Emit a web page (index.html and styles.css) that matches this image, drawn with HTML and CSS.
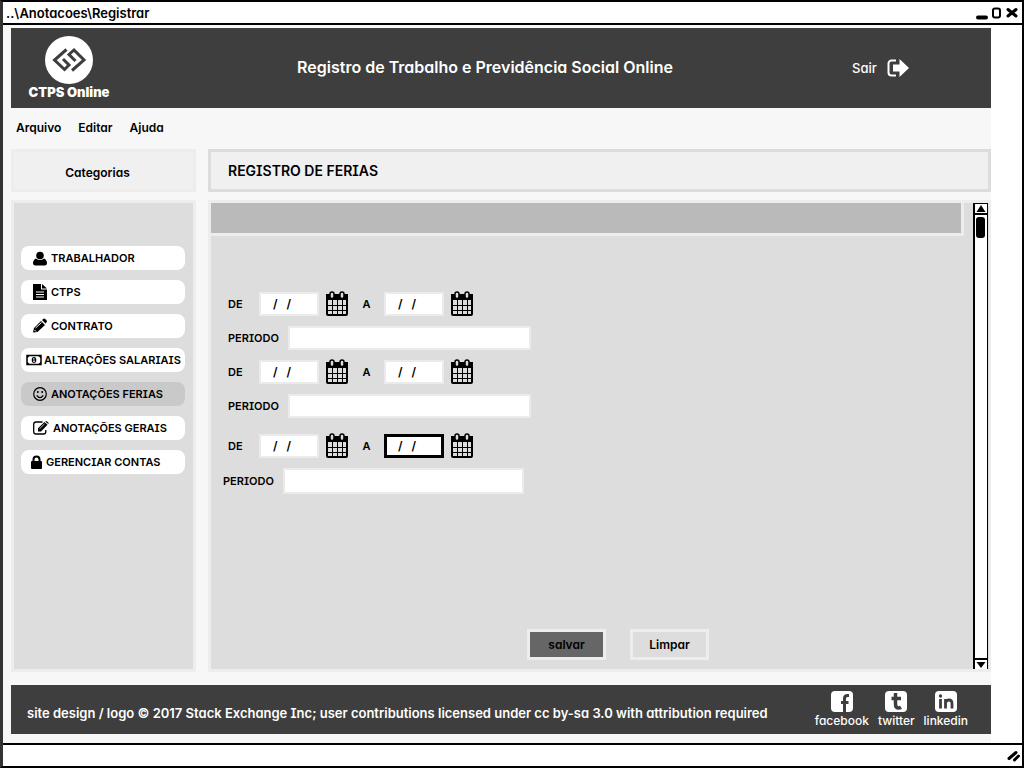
FILE: index.html
```html
<!DOCTYPE html>
<html lang="pt-BR">
<head>
<meta charset="utf-8">
<meta name="viewport" content="width=device-width, initial-scale=1">
<title>CTPS Online</title>
<link rel="stylesheet" href="styles.css">
</head>
<body>
<svg class="symbols" aria-hidden="true">
  <symbol id="calendar" viewBox="0 0 24 26">
    <rect x="2" y="4" width="20" height="20" rx="1" fill="none" stroke="#000" stroke-width="2"/>
    <path d="M1 3h22v6H1z"/>
    <path d="M7.500 9v15M12.500 9v15M17.500 9v15M2 14.500h20M2 19.500h20" stroke="#000" stroke-width="1"/>
    <rect x="5" y="1" width="4" height="6.500" rx="2" fill="#ddd" stroke="#000" stroke-width="1.500"/>
    <rect x="15" y="1" width="4" height="6.500" rx="2" fill="#ddd" stroke="#000" stroke-width="1.500"/>
  </symbol>
</svg>
<div class="window">
  <header class="titlebar">
    <span>..\Anotacoes\Registrar</span>
    <svg class="titlebar-controls" width="44" height="16" viewBox="0 0 44 16" fill="none" stroke="#000" aria-hidden="true">
      <path d="M3 12.500h8" stroke-width="4" stroke-linecap="round"/>
      <rect x="18" y="3.500" width="7" height="9" rx="2" stroke-width="2"/>
      <path d="M33 4.500l8 6.500M41 4.500l-8 6.500" stroke-width="3" stroke-linecap="round"/>
    </svg>
  </header>

  <div class="workspace">
    <div class="banner">
      <div class="brand">
        <svg width="48" height="48" viewBox="0 0 48 48" aria-hidden="true">
          <circle cx="24" cy="24" r="24" fill="#fff"/>
          <g fill="none" stroke="#3e3e3e" stroke-width="3">
            <path d="M21.500 13.500L9.500 24l10 9.500 4.500-4.500-6-6"/>
            <path d="M27 34.500L39 24 29 14l-5 4.500 6.500 6.500"/>
          </g>
        </svg>
        <strong>CTPS Online</strong>
      </div>
      <h1 class="banner-title">Registro de Trabalho e Previdência Social Online</h1>
      <a class="logout" href="#">Sair
        <svg width="22" height="18" viewBox="0 0 22 18" aria-hidden="true">
          <path d="M9 1.500H4.500a3 3 0 0 0-3 3v9a3 3 0 0 0 3 3H9" fill="none" stroke="#fff" stroke-width="2"/>
          <path d="M6 5.500h6.500V0L22 9l-9.500 9v-5.500H6z" fill="#fff"/>
        </svg>
      </a>
    </div>

    <nav class="menu">
      <a href="#">Arquivo</a><a href="#">Editar</a><a href="#">Ajuda</a>
    </nav>

    <main class="columns">
      <h2 class="heading heading-side">Categorias</h2>
      <h2 class="heading heading-main">REGISTRO DE FERIAS</h2>

      <nav class="sidebar">
        <a class="category" href="#">
          <svg width="14" height="16" viewBox="0 0 14 16"><circle cx="7" cy="5.500" r="3.800"/><path d="M3 8.500q4 3.200 8 0 3 1.500 3 4.800 0 2.200-2.500 2.200h-9Q0 15.500 0 13.300 0 10 3 8.500z"/></svg>
          TRABALHADOR</a>
        <a class="category" href="#">
          <svg width="14" height="16" viewBox="0 0 14 16"><path d="M0 0h8v5.500h6V16H0z"/><path d="M9 0l5 4.500H9z"/><path d="M3 8h8M3 10.500h8M3 13h8" stroke="#fff"/></svg>
          CTPS</a>
        <a class="category" href="#">
          <svg width="14" height="16" viewBox="0 0 14 16"><path d="M0 14.500l1-4.500 7-7 4 4-7.500 7z"/><path d="M9 2l1.500-1.200q1 -.6 2 .4l1 1q.8 1 0 2L12.500 5.500z"/><path d="M2.500 10L8.500 4.500M1.500 12l1.500 1.500" stroke="#fff" stroke-width="1"/></svg>
          CONTRATO</a>
        <a class="category category-long" href="#">
          <svg width="16" height="12" viewBox="0 0 16 12"><rect x="1" y="1.500" width="14" height="9" fill="none" stroke="#000" stroke-width="1.500"/><path d="M1 1.500h3L1 4.500zM12 1.500h3v3zM1 7.500l3 3H1zM15 7.500v3h-3z"/><ellipse cx="8" cy="6" rx="2.300" ry="3"/><path d="M7 5l1-.7v3.200M7 7.600h2" stroke="#fff" fill="none" stroke-width=".8"/></svg>
          ALTERAÇÕES SALARIAIS</a>
        <a class="category category-current" href="#" aria-current="page">
          <svg width="14" height="16" viewBox="0 0 14 16"><g fill="none" stroke="#000" stroke-width="1.200"><circle cx="7" cy="8" r="6.300"/><path d="M3.800 9.300q3.200 4.500 6.400 0"/></g><circle cx="4.800" cy="6" r="1"/><circle cx="9.200" cy="6" r="1"/></svg>
          ANOTAÇÕES FERIAS</a>
        <a class="category" href="#">
          <svg width="16" height="16" viewBox="0 0 16 16"><path d="M9.500 2H3Q.7 2 .7 4.300v7.400Q.7 14 3 14h7.500q2.300 0 2.300-2.300V10" fill="none" stroke="#000" stroke-width="1.300"/><path d="M5 11.500V8.300L11.500 2l3 2.800L8 11.500zM12.200 1.400q1-.8 1.800 0l1.300 1.200q.7.700 0 1.500z"/><path d="M6.500 8.800L11.500 4" stroke="#fff" stroke-width=".7"/></svg>
          ANOTAÇÕES GERAIS</a>
        <a class="category category-account" href="#">
          <svg width="11" height="14" viewBox="0 0 11 14"><rect y="6" width="11" height="8" rx="1"/><path d="M2.500 7V4.500a3 3 0 0 1 6 0V7" fill="none" stroke="#000" stroke-width="2"/></svg>
          GERENCIAR CONTAS</a>
      </nav>

      <section class="panel">
        <form class="record-form">
          <div class="form-bar"></div>
          <div class="periods">
            <div class="period">
              <div class="date-row">
                <label class="from-label" for="from1">DE</label>
                <input class="date" id="from1" value="/   /">
                <svg class="calendar" aria-hidden="true"><use href="#calendar"/></svg>
                <label class="to-label" for="to1">A</label>
                <input class="date" id="to1" value="/   /">
                <svg class="calendar" aria-hidden="true"><use href="#calendar"/></svg>
              </div>
              <div class="period-row">
                <label for="period1">PERIODO</label>
                <input class="period-input" id="period1">
              </div>
            </div>
            <div class="period">
              <div class="date-row">
                <label class="from-label" for="from2">DE</label>
                <input class="date" id="from2" value="/   /">
                <svg class="calendar" aria-hidden="true"><use href="#calendar"/></svg>
                <label class="to-label" for="to2">A</label>
                <input class="date" id="to2" value="/   /">
                <svg class="calendar" aria-hidden="true"><use href="#calendar"/></svg>
              </div>
              <div class="period-row">
                <label for="period2">PERIODO</label>
                <input class="period-input" id="period2">
              </div>
            </div>
            <div class="period period-last">
              <div class="date-row">
                <label class="from-label" for="from3">DE</label>
                <input class="date" id="from3" value="/   /">
                <svg class="calendar" aria-hidden="true"><use href="#calendar"/></svg>
                <label class="to-label" for="to3">A</label>
                <input class="date date-active" id="to3" value="/   /">
                <svg class="calendar" aria-hidden="true"><use href="#calendar"/></svg>
              </div>
              <div class="period-row">
                <label for="period3">PERIODO</label>
                <input class="period-input" id="period3">
              </div>
            </div>
          </div>
          <div class="actions">
            <button class="button button-save" type="button">salvar</button>
            <button class="button" type="button">Limpar</button>
          </div>
        </form>
        <div class="scrollbar" aria-hidden="true">
          <svg class="scroll-arrow" viewBox="0 0 11 9"><path d="M5.500 1L10 8H1z"/></svg>
          <div class="scroll-track"><div class="scroll-thumb"></div></div>
          <svg class="scroll-arrow" viewBox="0 0 11 9"><path d="M1 2h9L5.500 8z"/></svg>
        </div>
      </section>
    </main>

    <footer class="footer">
      <p class="copyright">site design / logo © 2017 Stack Exchange Inc; user contributions licensed under cc by-sa 3.0 with attribution required</p>
      <div class="social">
        <a href="#">
          <svg width="22" height="21" viewBox="0 0 22 21"><rect width="22" height="21" rx="4" fill="#fff"/><path d="M18 4.500h-1.500q-3 0-3 3V21M10 11.500h7.500" fill="none" stroke="#3e3e3e" stroke-width="3"/></svg>
          facebook</a>
        <a href="#">
          <svg width="22" height="21" viewBox="0 0 22 21"><rect width="22" height="21" rx="4" fill="#fff"/><path d="M10.500 2v11q0 4 3 4 1.500 0 2.500-.7M6.500 7.500H16" fill="none" stroke="#3e3e3e" stroke-width="3.500"/></svg>
          twitter</a>
        <a href="#">
          <svg width="22" height="21" viewBox="0 0 22 21"><rect width="22" height="21" rx="4" fill="#fff"/><circle cx="5.500" cy="5" r="1.700" fill="#3e3e3e"/><path d="M5.500 8v9.500M10.500 8v9.500M10.500 12q.5-3 3.500-3t3 3.500v5" fill="none" stroke="#3e3e3e" stroke-width="2.800"/></svg>
          linkedin</a>
      </div>
    </footer>
  </div>

  <div class="statusbar">
    <svg width="14" height="13" viewBox="0 0 14 13" fill="none" stroke="#000" stroke-width="3" stroke-linecap="round" aria-hidden="true"><path d="M2 9.500l7-6M7.500 11l4-4"/></svg>
  </div>
</div>
</body>
</html>
```
FILE: styles.css
```css
* {
  box-sizing: border-box;
}

body {
  margin: 0;
  background: #fff;
  color: #000;
  font: 600 12px/16px Inter, "Noto Sans", sans-serif;
  font-feature-settings: "cv11", "cv08";
}

a {
  color: inherit;
  text-decoration: none;
}

h1,
h2,
p {
  margin: 0;
}

input,
button {
  font: inherit;
  font-feature-settings: inherit;
  color: inherit;
  border-radius: 0;
}

.symbols {
  position: absolute;
  width: 0;
  height: 0;
}

.window {
  display: flex;
  flex-direction: column;
  min-height: 100vh;
  border: 2px solid #000;
  border-left: 3px solid #333;
}

.titlebar {
  display: flex;
  align-items: center;
  justify-content: space-between;
  height: 23px;
  padding: 0 3px;
  border-bottom: 2px solid #000;
  font-size: 13px;
}

.workspace {
  display: flex;
  flex: 1;
  flex-direction: column;
  margin-right: 31px;
  padding: 3px 0 9px 8px;
  background: #f7f7f7;
}

.banner {
  display: grid;
  grid-template-columns: 180px 1fr 180px;
  align-items: center;
  height: 80px;
  padding-left: 16px;
  background: #3e3e3e;
  color: #fff;
}

.brand {
  display: flex;
  flex-direction: column;
  align-items: center;
  width: 84px;
  font-size: 13px;
  font-weight: 700;
}

.banner-title {
  padding: 0 48px 2px 0;
  font-size: 16px;
  font-weight: 600;
  line-height: 20px;
  text-align: center;
  white-space: nowrap;
}

.logout {
  display: flex;
  align-items: center;
  gap: 10px;
  padding-left: 41px;
  font-size: 13px;
  font-weight: 500;
}

.menu {
  display: flex;
  align-items: center;
  gap: 17px;
  height: 41px;
  padding: 0 5px 2px;
}

.columns {
  display: grid;
  flex: 1;
  grid-template-columns: 185px 1fr;
  grid-template-rows: auto 1fr;
  gap: 8px 12px;
}

.heading {
  padding: 10px 17px;
  border: 3px solid #dcdcdc;
  background: #f0f0f0;
  font-size: 14px;
  font-weight: 600;
  line-height: 17px;
}

.heading-side {
  padding: 12px 12px 8px 0;
  border-color: #ededed;
  font-size: 12px;
  text-align: center;
}

.sidebar {
  display: flex;
  flex-direction: column;
  gap: 10px;
  padding: 43px 8px 43px 7px;
  border: 3px solid #ededed;
  background: #ddd;
}

.category {
  display: flex;
  align-items: center;
  gap: 4px;
  height: 24px;
  padding: 0 0 1px 12px;
  border-radius: 8px;
  background: #fff;
  font-size: 11px;
  white-space: nowrap;
}

.category-long {
  gap: 2px;
  padding-left: 5px;
}

.category-account {
  padding-left: 10px;
}

.category-current {
  background: #c9c9c9;
}

.panel {
  display: flex;
  border: 3px solid #ededed;
  border-right-width: 2px;
  background: #ddd;
}

.record-form {
  display: flex;
  flex: 1;
  flex-direction: column;
}

.form-bar {
  height: 33px;
  margin-right: 9px;
  border: solid #ededed;
  border-width: 0 3px 3px 0;
  background: #bababa;
}

.periods {
  display: flex;
  flex-direction: column;
  gap: 8px;
  padding: 54px 0 0 17px;
  font-size: 11px;
}

.period {
  display: flex;
  flex-direction: column;
  gap: 8px;
}

.period-last {
  padding-top: 6px;
}

.date-row,
.period-row {
  display: flex;
  align-items: center;
}

.from-label {
  width: 31px;
}

.to-label {
  width: 35px;
  text-align: center;
}

.date {
  width: 60px;
  height: 24px;
  padding: 0 12px 1px;
  border: 2px solid #ebebeb;
  background: #fff;
  font-size: 12px;
}

.date-active {
  padding: 0 11px 1px;
  border: 3px solid #000;
  outline: none;
}

.calendar {
  width: 24px;
  height: 26px;
  margin-left: 6px;
}

.period-row label {
  width: 60px;
}

.date-row {
  height: 28px;
}

.period-input {
  width: 243px;
  height: 24px;
  border: 2px solid #ebebeb;
  background: #fff;
}

.period-last .period-row {
  margin-left: -5px;
}

.period-last .period-input {
  width: 241px;
  height: 26px;
}

.actions {
  display: flex;
  justify-content: center;
  gap: 24px;
  margin-top: auto;
  padding: 0 0 9px 52px;
}

.button {
  width: 79px;
  height: 31px;
  padding: 0;
  border: 3px solid #ededed;
  background: #ddd;
}

.button-save {
  background: #666;
}

.scrollbar {
  display: flex;
  flex-direction: column;
  width: 15px;
  margin-right: 1px;
  border: solid #000;
  border-width: 1px 1px 0 2px;
  background: #fff;
}

.scroll-arrow {
  width: 12px;
  height: 9px;
}

.scroll-track {
  flex: 1;
  padding: 2px 1px;
  border: solid #000;
  border-width: 2px 0;
}

.scroll-thumb {
  width: 9px;
  height: 21px;
  border-radius: 3px;
  background: #000;
}

.footer {
  display: flex;
  align-items: center;
  justify-content: space-between;
  height: 49px;
  margin-top: 13px;
  padding: 0 23px 0 16px;
  background: #3e3e3e;
  color: #fff;
}

.copyright {
  padding-top: 7px;
  font-size: 13px;
}

.social {
  display: flex;
  gap: 9px;
  font-weight: 500;
}

.social a {
  display: flex;
  flex-direction: column;
  align-items: center;
  gap: 1px;
}

.statusbar {
  display: flex;
  align-items: center;
  justify-content: flex-end;
  height: 23px;
  padding-right: 1px;
  border-top: 2px solid #000;
}
```
